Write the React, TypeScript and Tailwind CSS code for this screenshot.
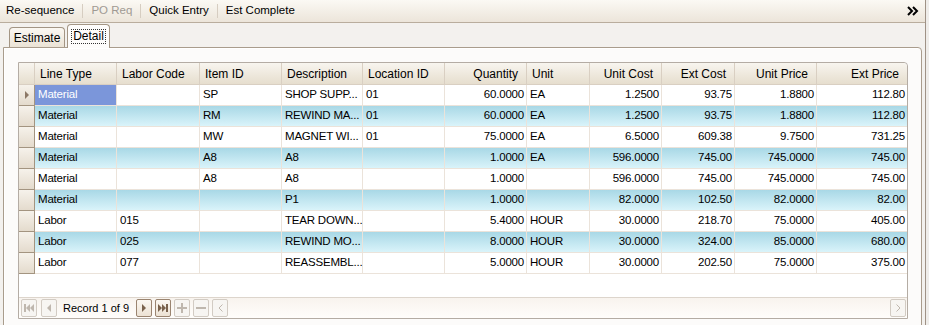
import React from "react";

const font = { fontFamily: '"Liberation Sans", Arial, sans-serif' };

type Col = { label: string; w: number; right?: boolean };

const cols: Col[] = [
  { label: "Line Type", w: 82 },
  { label: "Labor Code", w: 83 },
  { label: "Item ID", w: 82 },
  { label: "Description", w: 81 },
  { label: "Location ID", w: 82 },
  { label: "Quantity", w: 82, right: true },
  { label: "Unit", w: 63 },
  { label: "Unit Cost", w: 72, right: true },
  { label: "Ext Cost", w: 73, right: true },
  { label: "Unit Price", w: 82, right: true },
  { label: "Ext Price", w: 90, right: true },
];

const rows: string[][] = [
  ["Material", "", "SP", "SHOP SUPP...", "01", "60.0000", "EA", "1.2500", "93.75", "1.8800", "112.80"],
  ["Material", "", "RM", "REWIND MA...", "01", "60.0000", "EA", "1.2500", "93.75", "1.8800", "112.80"],
  ["Material", "", "MW", "MAGNET WI...", "01", "75.0000", "EA", "6.5000", "609.38", "9.7500", "731.25"],
  ["Material", "", "A8", "A8", "", "1.0000", "EA", "596.0000", "745.00", "745.0000", "745.00"],
  ["Material", "", "A8", "A8", "", "1.0000", "", "596.0000", "745.00", "745.0000", "745.00"],
  ["Material", "", "", "P1", "", "1.0000", "", "82.0000", "102.50", "82.0000", "82.00"],
  ["Labor", "015", "", "TEAR DOWN...", "", "5.4000", "HOUR", "30.0000", "218.70", "75.0000", "405.00"],
  ["Labor", "025", "", "REWIND MO...", "", "8.0000", "HOUR", "30.0000", "324.00", "85.0000", "680.00"],
  ["Labor", "077", "", "REASSEMBL...", "", "5.0000", "HOUR", "30.0000", "202.50", "75.0000", "375.00"],
];

function NavButton({ active, children }: { active?: boolean; children: React.ReactNode }) {
  return (
    <div
      className={
        "flex h-[18px] w-[16px] items-center justify-center rounded-[2px] border " +
        (active
          ? "border-[#9a8470] bg-gradient-to-b from-[#fbf7f1] to-[#ece2d4] text-[#7a624c]"
          : "border-[#d2cbc3] bg-[#f7f5f2] text-[#bfb7ae]")
      }
    >
      {children}
    </div>
  );
}

function Tri({ dir }: { dir: "l" | "r" }) {
  return (
    <svg width="6" height="8" viewBox="0 0 6 8">
      {dir === "r" ? <path d="M1 0 L5 4 L1 8 Z" fill="currentColor" /> : <path d="M5 0 L1 4 L5 8 Z" fill="currentColor" />}
    </svg>
  );
}

function Bar({ side }: { side: "l" | "r" }) {
  return (
    <svg width="10" height="8" viewBox="0 0 10 8">
      {side === "r" ? (
        <>
          <path d="M0 0 L4 4 L0 8 Z" fill="currentColor" />
          <path d="M4 0 L8 4 L4 8 Z" fill="currentColor" />
          <rect x="8" y="0" width="2" height="8" fill="currentColor" />
        </>
      ) : (
        <>
          <rect x="0" y="0" width="2" height="8" fill="currentColor" />
          <path d="M6 0 L2 4 L6 8 Z" fill="currentColor" />
          <path d="M10 0 L6 4 L10 8 Z" fill="currentColor" />
        </>
      )}
    </svg>
  );
}

function Sep() {
  return <span className="mx-[8px] h-[14px] w-px bg-[#d6cdc1]" />;
}

export default function App() {
  return (
    <div className="h-[325px] w-[929px] overflow-hidden bg-[#efedea] text-black" style={font}>
      <div className="h-[325px] w-[926px] border-r border-[#9f9286] bg-[#f3f1ee]">
        {/* toolbar */}
        <div className="flex h-[23px] items-center border-b border-[#b9ad9d] bg-gradient-to-b from-[#fbf9f4] to-[#ece5da] pl-[6px] pr-[6px] text-[11.5px]">
          <span>Re-sequence</span>
          <Sep />
          <span className="text-[#a09a93]">PO Req</span>
          <Sep />
          <span>Quick Entry</span>
          <Sep />
          <span>Est Complete</span>
          <svg className="ml-auto" width="12" height="10" viewBox="0 0 12 10">
            <path d="M1 1 L5 5 L1 9" stroke="black" strokeWidth="2" fill="none" />
            <path d="M6 1 L10 5 L6 9" stroke="black" strokeWidth="2" fill="none" />
          </svg>
        </div>

        {/* tabs */}
        <div className="relative h-[24px]">
          <div className="absolute left-[9px] top-[4px] flex h-[20px] w-[56px] items-center justify-center rounded-t-[4px] border border-b-0 border-[#a39584] bg-gradient-to-b from-[#fbf8f2] to-[#ebe3d6] text-[12px]">
            Estimate
          </div>
          <div className="absolute left-[67px] top-[1px] z-10 flex h-[24px] w-[43px] items-center justify-center rounded-t-[4px] border border-b-0 border-[#a39584] bg-[#fdfcfb] text-[12px]">
            <span className="border border-dotted border-[#333] px-px leading-[13px]">Detail</span>
          </div>
        </div>

        {/* tab panel */}
        <div className="ml-[3px] mr-[3px] h-[290px] rounded-tr-[4px] border border-[#a99c8c] bg-[#fcfbfa] pl-[14px] pt-[14px] shadow-[inset_1px_1px_0_#ffffff]">
          <div className="w-[890px] rounded-tr-[4px] border border-[#b4aca4] bg-white text-[11.5px]">
            {/* header */}
            <div className="flex h-[22px] text-[12px]">
              <div className="w-[16px] border-r border-b border-[#d9cfc2] bg-gradient-to-b from-[#f8f5ef] to-[#e6dece]" />
              {cols.map((c, i) => (
                <div
                  key={c.label}
                  style={{ width: c.w }}
                  className={
                    "flex items-center border-r border-b border-[#d9cfc2] bg-gradient-to-b from-[#f8f5ef] to-[#e6dece] px-[5px] " +
                    (c.right ? "justify-end pr-[8px] " : "") +
                    (i === cols.length - 1 ? "rounded-tr-[4px] border-r-0" : "")
                  }
                >
                  {c.label}
                </div>
              ))}
            </div>
            {/* rows */}
            {rows.map((r, ri) => {
              const alt = ri % 2 === 1;
              return (
                <div
                  key={ri}
                  className={"flex h-[21px] " + (alt ? "bg-gradient-to-b from-[#a8d8e6] to-[#dcf5fb]" : "bg-white")}
                >
                  <div className="flex w-[16px] items-center justify-center border-r border-b border-[#a39480] bg-gradient-to-b from-[#f6f2eb] to-[#e4dbcd] text-[#8c7866]">
                    {ri === 0 && <Tri dir="r" />}
                  </div>
                  {r.map((v, ci) => {
                    const c = cols[ci];
                    const sel = ri === 0 && ci === 0;
                    return (
                      <div
                        key={ci}
                        style={{ width: c.w }}
                        className={
                          "flex items-center whitespace-nowrap border-r border-b border-[#ebe3da] pl-[3px] tracking-[-0.2px] " +
                          (c.right ? "justify-end pr-[2px] " : "") +
                          (sel ? "bg-[#7b96da] text-white " : "") +
                          (ci === cols.length - 1 ? "border-r-0" : "")
                        }
                      >
                        {v}
                      </div>
                    );
                  })}
                </div>
              );
            })}
            <div className="h-[23px]" />
            {/* navigator */}
            <div className="flex h-[21px] items-center border-t border-[#ddd5cc] bg-gradient-to-b from-[#f8f3ee] to-[#fffdfb] pl-[2px]">
              <div className="flex items-center gap-[4px]">
                <NavButton>
                  <Bar side="l" />
                </NavButton>
                <NavButton>
                  <Tri dir="l" />
                </NavButton>
              </div>
              <span className="ml-[6px] mr-[7px] text-[11px]">Record 1 of 9</span>
              <div className="flex items-center gap-[3px]">
                <NavButton active>
                  <Tri dir="r" />
                </NavButton>
                <NavButton active>
                  <Bar side="r" />
                </NavButton>
                <NavButton>
                  <svg width="10" height="10" viewBox="0 0 10 10">
                    <rect x="4" y="0" width="2" height="10" fill="currentColor" />
                    <rect x="0" y="4" width="10" height="2" fill="currentColor" />
                  </svg>
                </NavButton>
                <NavButton>
                  <svg width="10" height="10" viewBox="0 0 10 10">
                    <rect x="0" y="4" width="10" height="2" fill="currentColor" />
                  </svg>
                </NavButton>
                <NavButton>
                  <svg width="5" height="8" viewBox="0 0 5 8">
                    <path d="M4.5 0.5 L1 4 L4.5 7.5" stroke="currentColor" fill="none" />
                  </svg>
                </NavButton>
              </div>
              <div className="flex-1" />
              <NavButton>
                <svg width="5" height="8" viewBox="0 0 5 8">
                  <path d="M0.5 0.5 L4 4 L0.5 7.5" stroke="currentColor" fill="none" />
                </svg>
              </NavButton>
              <div className="w-[1px]" />
            </div>
          </div>
        </div>
      </div>
    </div>
  );
}
